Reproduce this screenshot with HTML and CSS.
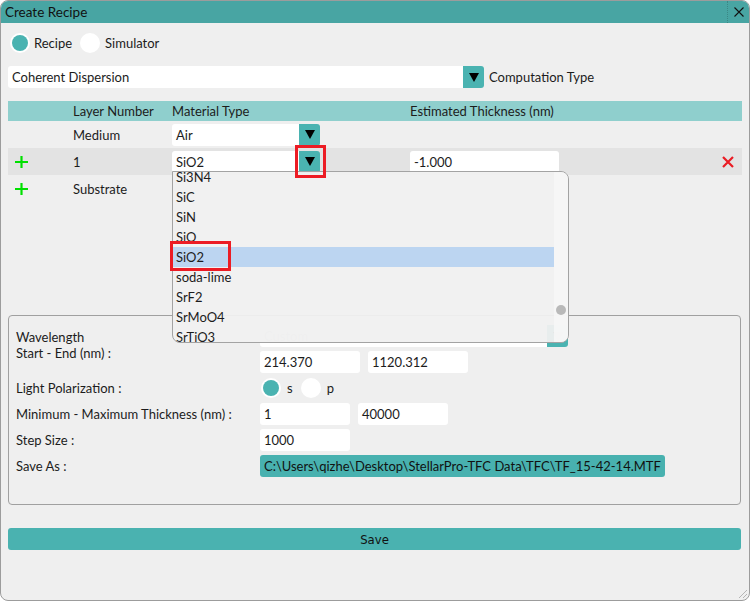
FILE: index.html
```html
<!DOCTYPE html>
<html>
<head>
<meta charset="utf-8">
<title>Create Recipe</title>
<link rel="stylesheet" href="styles.css">
</head>
<body>
<div class="window">
  <div class="titlebar">
    <span class="title">Create Recipe</span>
    <span class="close"><svg width="10" height="10" viewBox="0 0 10 10"><path d="M0.5 0.5L9.5 9.5M9.5 0.5L0.5 9.5" stroke="#111" stroke-width="1.1" fill="none"/></svg></span>
  </div>
  <div class="content">
    <div class="radio-row">
      <span class="radio checked"></span><span class="radio-label first">Recipe</span>
      <span class="radio"></span><span class="radio-label second">Simulator</span>
    </div>
    <div class="combo-row">
      <div class="combo wide">
        <span class="combo-field">Coherent Dispersion</span>
        <span class="combo-btn"><svg width="10" height="9" viewBox="0 0 10 9"><path d="M0 0H10L5 9Z" fill="#000"/></svg></span>
      </div>
      <span class="combo-caption">Computation Type</span>
    </div>
    <div class="table">
      <div class="trow head"><span></span><span>Layer Number</span><span>Material Type</span><span>Estimated Thickness (nm)</span></div>
      <div class="trow">
        <span></span><span>Medium</span>
        <div class="combo small">
          <span class="combo-field">Air</span>
          <span class="combo-btn"><svg width="10" height="9" viewBox="0 0 10 9"><path d="M0 0H10L5 9Z" fill="#000"/></svg></span>
        </div>
        <span></span>
      </div>
      <div class="trow band">
        <span class="plus"><svg width="13" height="12" viewBox="0 0 13 12"><path d="M6.5 0V12M0 6H13" stroke="#00e000" stroke-width="2.2" fill="none"/></svg></span>
        <span>1</span>
        <div class="combo small">
          <span class="combo-field">SiO2</span>
          <span class="combo-btn"><svg width="10" height="9" viewBox="0 0 10 9"><path d="M0 0H10L5 9Z" fill="#000"/></svg></span>
        </div>
        <div class="thick-cell">
          <span class="field thick">-1.000</span>
          <svg width="12" height="12" viewBox="0 0 12 12"><path d="M1 1L11 11M11 1L1 11" stroke="#ea1c24" stroke-width="2.2" fill="none"/></svg>
        </div>
      </div>
      <div class="trow">
        <span class="plus"><svg width="13" height="12" viewBox="0 0 13 12"><path d="M6.5 0V12M0 6H13" stroke="#00e000" stroke-width="2.2" fill="none"/></svg></span>
        <span>Substrate</span><span></span><span></span>
      </div>
    </div>
    <div class="group">
      <div class="ggrid">
        <div class="glabel two">Wavelength<br>Start - End (nm) :</div>
        <div class="combo custom">
          <span class="combo-field muted">Custom</span>
          <span class="combo-btn"><svg width="10" height="9" viewBox="0 0 10 9"><path d="M0 0H10L5 9Z" fill="#000"/></svg></span>
        </div>
        <div class="fields"><span class="field w100">214.370</span><span class="field w100">1120.312</span></div>
        <div class="glabel">Light Polarization :</div>
        <div class="fields pol">
          <span class="radio checked"></span><span class="pol-label">s</span>
          <span class="radio"></span><span class="pol-label">p</span>
        </div>
        <div class="glabel">Minimum - Maximum Thickness (nm) :</div>
        <div class="fields"><span class="field w90">1</span><span class="field w90">40000</span></div>
        <div class="glabel">Step Size :</div>
        <div class="fields"><span class="field w90">1000</span></div>
        <div class="glabel">Save As :</div>
        <div class="fields"><span class="field path">C:\Users\qizhe\Desktop\StellarPro-TFC Data\TFC\TF_15-42-14.MTF</span></div>
      </div>
    </div>
    <div class="save">Save</div>
  </div>

  <div class="popup">
    <div class="plist">
      <div class="pitem">Si3N4</div>
      <div class="pitem">SiC</div>
      <div class="pitem">SiN</div>
      <div class="pitem">SiO</div>
      <div class="pitem selected">SiO2</div>
      <div class="pitem">soda-lime</div>
      <div class="pitem">SrF2</div>
      <div class="pitem">SrMoO4</div>
      <div class="pitem">SrTiO3</div>
    </div>
    <div class="pscroll"><span class="thumb"></span></div>
  </div>
  <div class="mark mark-arrow"></div>
  <div class="mark mark-item"></div>
  <svg class="grip" width="12" height="12" viewBox="0 0 12 12"><path d="M11 3L3 11M11 7L7 11" stroke="#b5b5b5" stroke-width="1" fill="none"/></svg>
</div>
</body>
</html>
```
FILE: styles.css
```css
* { box-sizing: border-box; }
html, body { margin: 0; padding: 0; }
body {
  width: 750px;
  height: 601px;
  font-family: Lato, "Noto Sans", sans-serif;
  font-size: 13px;
  color: #1c1c1c;
  background: #ffffff;
}
.window {
  position: relative;
  width: 750px;
  height: 601px;
  border: 1px solid #9c9c9c;
  border-radius: 8px;
  background: #efefef;
  overflow: hidden;
}
.titlebar {
  height: 22px;
  background: #48a5a3;
  display: flex;
  align-items: center;
}
.title {
  flex: 1;
  padding-left: 4px;
  font-size: 13.5px;
  color: #111;
}
.close {
  width: 22px;
  height: 22px;
  border-left: 1px dotted rgba(0, 0, 0, 0.18);
  display: flex;
  align-items: center;
  justify-content: center;
}
.content { padding: 0 7px; }

.radio-row {
  margin-top: 10px;
  height: 20px;
  display: flex;
  align-items: center;
  padding-left: 2px;
}
.radio {
  flex: none;
  width: 20px;
  height: 20px;
  border-radius: 50%;
  background: #fff;
  display: flex;
  align-items: center;
  justify-content: center;
}
.radio.checked::after {
  content: "";
  width: 16px;
  height: 16px;
  border-radius: 50%;
  background: #4ab3b1;
}
.radio-label.first { margin: 0 8px 0 4px; }
.radio-label.second { margin-left: 5px; }

.combo-row {
  margin-top: 13px;
  height: 22px;
  display: flex;
  align-items: center;
}
.combo { display: flex; height: 22px; }
.combo-field {
  flex: 1;
  background: #fff;
  border-radius: 3px 0 0 3px;
  padding-left: 4px;
  display: flex;
  align-items: center;
}
.combo-field.muted { color: #d0d0d0; }
.combo-btn {
  width: 21px;
  background: #4ab3b1;
  border-radius: 0 3px 3px 0;
  display: flex;
  align-items: center;
  justify-content: center;
}
.combo.wide { width: 476px; }
.combo.small { width: 148px; }
.combo.custom { width: 308px; }
.combo-caption { margin-left: 5px; }

.table { margin-top: 13px; }
.trow {
  display: grid;
  grid-template-columns: 65px 99px 238px 1fr;
  align-items: center;
  height: 27px;
}
.trow.head { height: 20px; background: #8fcfcd; }
.trow.band { background: #e3e3e3; }
.plus { display: flex; padding-left: 7px; }
.thick-cell {
  display: flex;
  justify-content: space-between;
  align-items: center;
  padding-right: 8px;
}
.field {
  height: 22px;
  background: #fff;
  border-radius: 3px;
  padding-left: 4px;
  display: flex;
  align-items: center;
  white-space: nowrap;
}
.field.thick { width: 149px; }
.field.w100 { width: 100px; }
.field.w90 { width: 90px; }
.field.path { width: 405px; background: #48b1af; color: #111; }

.group {
  margin-top: 113px;
  margin-right: 1px;
  height: 190px;
  border: 1px solid #a0a0a0;
  border-radius: 4px;
  padding: 9px 7px;
}
.ggrid {
  display: grid;
  grid-template-columns: 244px 1fr;
  grid-auto-rows: 22px;
  row-gap: 4px;
}
.glabel { align-self: center; line-height: 16px; white-space: nowrap; }
.glabel.two { grid-row: span 2; align-self: start; padding-top: 4px; }
.fields { display: flex; align-items: center; gap: 8px; }
.fields.pol { gap: 0; padding-left: 1px; }
.pol-label { margin: 0 8px 0 6px; }

.save {
  margin-top: 23px;
  margin-right: 1px;
  height: 22px;
  background: #4ab2b0;
  border-radius: 3px;
  display: flex;
  align-items: center;
  justify-content: center;
  font-family: "Liberation Sans Narrow", "DejaVu Sans Condensed", sans-serif;
  font-size: 13px;
  color: #111;
}

.popup {
  position: absolute;
  left: 171px;
  top: 170px;
  width: 397px;
  height: 172px;
  display: flex;
  overflow: hidden;
  border: 1px solid #a3a3a3;
  border-radius: 0 8px 8px 8px;
  background: rgba(240, 240, 240, 0.95);
}
.plist { flex: 1; margin-top: -5px; }
.pitem {
  height: 20px;
  line-height: 20px;
  padding-left: 3px;
  white-space: nowrap;
}
.pitem.selected { background: #bcd5f1; }
.pscroll {
  width: 14px;
  background: rgba(246, 246, 246, 0.9);
  display: flex;
  flex-direction: column;
  align-items: center;
}
.thumb {
  margin-top: 133px;
  width: 10px;
  height: 10px;
  border-radius: 50%;
  background: #b9b9b9;
}
.mark {
  position: absolute;
  border: 3px solid #ec1c24;
}
.mark-arrow { left: 294px; top: 144px; width: 31px; height: 33px; }
.mark-item { left: 169px; top: 240px; width: 61px; height: 30px; }
.grip { position: absolute; right: 1px; bottom: 1px; }
```
